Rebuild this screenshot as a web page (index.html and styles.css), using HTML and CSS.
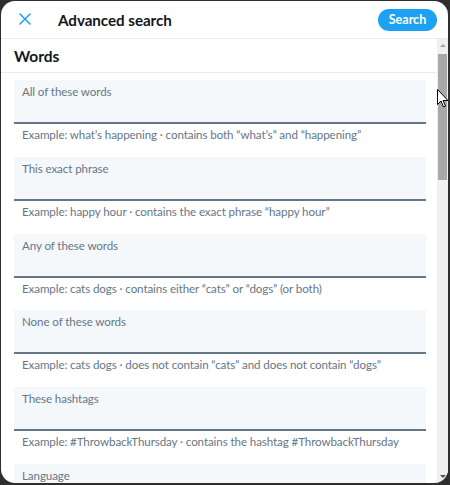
FILE: index.html
```html
<!DOCTYPE html>
<html>
<head>
<meta charset="utf-8">
<link rel="stylesheet" href="styles.css">
</head>
<body>
<div class="modal">
  <header class="topbar">
    <button class="close" aria-label="Close">
      <svg viewBox="0 0 12 12" width="12" height="12"><path d="M1 1 L11 11 M11 1 L1 11" stroke="#1da1f2" stroke-width="1.5" fill="none" stroke-linecap="round"/></svg>
    </button>
    <h1 class="title">Advanced search</h1>
    <button class="search-btn">Search</button>
  </header>
  <div class="body">
    <div class="content">
      <h2 class="section-title">Words</h2>
      <div class="fields">
        <div class="group">
          <div class="field"><span class="label">All of these words</span></div>
          <p class="hint">Example: what’s happening · contains both “what’s” and “happening”</p>
        </div>
        <div class="group">
          <div class="field"><span class="label">This exact phrase</span></div>
          <p class="hint">Example: happy hour · contains the exact phrase “happy hour”</p>
        </div>
        <div class="group">
          <div class="field"><span class="label">Any of these words</span></div>
          <p class="hint">Example: cats dogs · contains either “cats” or “dogs” (or both)</p>
        </div>
        <div class="group">
          <div class="field"><span class="label">None of these words</span></div>
          <p class="hint">Example: cats dogs · does not contain “cats” and does not contain “dogs”</p>
        </div>
        <div class="group">
          <div class="field"><span class="label">These hashtags</span></div>
          <p class="hint">Example: #ThrowbackThursday · contains the hashtag #ThrowbackThursday</p>
        </div>
        <div class="group">
          <div class="field"><span class="label">Language</span></div>
        </div>
      </div>
    </div>
    <div class="scrollbar">
      <span class="arrow up"></span>
      <div class="track"><div class="thumb"></div></div>
      <span class="arrow down"></span>
    </div>
    <svg class="cursor" width="12" height="19" viewBox="0 0 12 19"><path d="M0.5 0.5 L0.5 15.5 L4 12 L6.5 18 L8.5 17 L6 11.5 L11 11.5 Z" fill="#fff" stroke="#000" stroke-width="1"/></svg>
  </div>
</div>
</body>
</html>
```
FILE: styles.css
```css
* { box-sizing: border-box; }
html, body { margin: 0; padding: 0; }
body {
  width: 450px;
  height: 485px;
  background: #2e2e2e;
  overflow: hidden;
  padding: 1px 2px 2px 1px;
  font-family: Lato, "Open Sans", sans-serif;
}
.modal {
  width: 447px;
  height: 482px;
  background: #fff;
  border-radius: 14px;
  overflow: hidden;
  display: flex;
  flex-direction: column;
}
.topbar {
  height: 38px;
  flex: 0 0 38px;
  border-bottom: 1px solid #e6ecf0;
  display: flex;
  align-items: center;
  padding: 0 11px 0 17px;
}
.close {
  border: 0;
  background: none;
  padding: 0;
  width: 14px;
  height: 14px;
  display: flex;
  align-items: center;
  justify-content: center;
  margin-top: -1px;
}
.title {
  margin: 0 0 0 26px;
  font-size: 15.2px;
  letter-spacing: -0.05px;
  font-weight: 700;
  color: #14171a;
  flex: 1;
}
.search-btn {
  border: 0;
  background: #1da1f2;
  color: #fff;
  font-family: inherit;
  font-weight: 700;
  font-size: 12.5px;
  height: 22px;
  width: 59px;
  border-radius: 11px;
  padding: 0;
}
.body {
  flex: 1;
  display: flex;
  position: relative;
  min-height: 0;
}
.content {
  flex: 1;
  overflow: hidden;
}
.section-title {
  margin: 0;
  height: 34px;
  border-bottom: 1px solid #e6ecf0;
  padding: 7px 13px 0;
  font-size: 15.5px;
  line-height: 20px;
  font-weight: 700;
  color: #14171a;
}
.fields {
  padding: 7px 11px 0 13px;
}
.group {
  height: 76.8px;
}
.field {
  height: 44px;
  background: #f5f8fa;
  border-bottom: 2px solid #657786;
  padding: 2px 8px 0;
  line-height: 16px;
}
.label, .hint {
  font-size: 11.6px;
  letter-spacing: -0.1px;
  color: #657786;
}
.hint {
  margin: 0;
  padding: 2px 8px 0;
  line-height: 17px;
  white-space: nowrap;
}
.scrollbar {
  width: 11px;
  flex: 0 0 11px;
  background: #f0f0f0;
  display: flex;
  flex-direction: column;
  align-items: center;
}
.arrow {
  width: 0;
  height: 0;
  border-left: 3px solid transparent;
  border-right: 3px solid transparent;
  margin: 5px 0;
}
.arrow.up { border-bottom: 3px solid #a3a3a3; }
.arrow.down { border-top: 3px solid #505050; }
.track {
  flex: 1;
  width: 100%;
  padding: 2px 1px 0;
}
.thumb {
  width: 9px;
  height: 126px;
  background: #a8a8a8;
}
.cursor {
  position: absolute;
  right: -1px;
  top: 50px;
}
```
